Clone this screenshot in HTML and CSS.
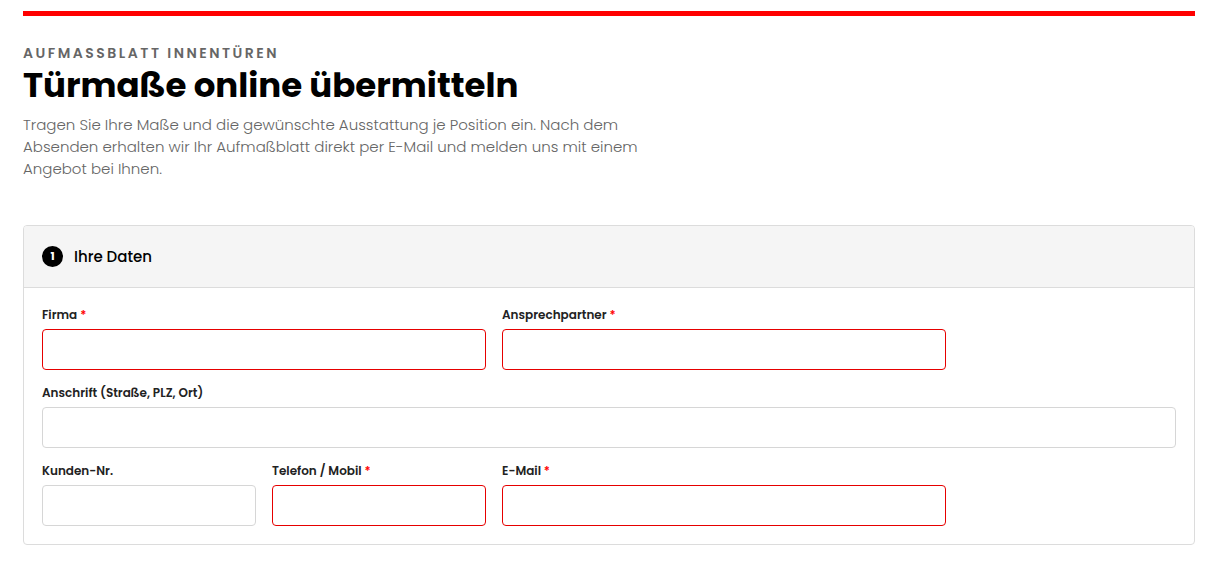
FILE: index.html
```html
<!DOCTYPE html>
<html lang="de">

<head>
  <meta charset="UTF-8" />
  <meta name="viewport" content="width=device-width, initial-scale=1.0" />
  <title>Aufmaßblatt Innentüren</title>
  <link rel="stylesheet" href="styles.css">
</head>

<body>
  <div class="page">
    <div class="topbar"></div>

    <header class="intro">
      <p class="eyebrow">Aufmassblatt Innentüren</p>
      <h1 class="title">Türmaße online übermitteln</h1>
      <p class="lead">Tragen Sie Ihre Maße und die gewünschte Ausstattung je Position ein. Nach dem Absenden erhalten wir Ihr Aufmaßblatt direkt per E-Mail und melden uns mit einem Angebot bei Ihnen.</p>
    </header>

    <form class="card" id="aufmass">
      <div class="cardHead">
        <span class="step">1</span>
        <h2>Ihre Daten</h2>
      </div>

      <div class="cardBody">
        <div class="field span2">
          <label for="firma">Firma <span class="req">*</span></label>
          <input class="inputText required" type="text" id="firma" name="firma" />
        </div>
        <div class="field span2">
          <label for="ansprechpartner">Ansprechpartner <span class="req">*</span></label>
          <input class="inputText required" type="text" id="ansprechpartner" name="ansprechpartner" />
        </div>

        <div class="field span5">
          <label for="anschrift">Anschrift (Straße, PLZ, Ort)</label>
          <input class="inputText" type="text" id="anschrift" name="anschrift" />
        </div>

        <div class="field">
          <label for="kundennr">Kunden-Nr.</label>
          <input class="inputText" type="text" id="kundennr" name="kundennr" />
        </div>
        <div class="field">
          <label for="telefon">Telefon / Mobil <span class="req">*</span></label>
          <input class="inputText required" type="text" id="telefon" name="telefon" />
        </div>
        <div class="field span2">
          <label for="email">E-Mail <span class="req">*</span></label>
          <input class="inputText required" type="email" id="email" name="email" />
        </div>
      </div>
    </form>
  </div>
</body>

</html>
```

FILE: styles.css
```css
body {
  margin: 0;
  font-family: 'Poppins', 'Inter', 'Open Sans', sans-serif;
  color: #111;
  background: #fff;
}

.page {
  width: 1172px;
  margin-left: 23px;
  padding-top: 11px;
}

.topbar {
  height: 5px;
  background: #ff0000;
}

.intro {
  padding-top: 28px;
}

.eyebrow {
  margin: 0;
  font-size: 14px;
  line-height: 18px;
  font-weight: 600;
  letter-spacing: 2.5px;
  text-transform: uppercase;
  color: #666;
}

.title {
  margin: 4px 0 2px;
  font-size: 34px;
  line-height: 38px;
  font-weight: 700;
  color: #000;
}

.lead {
  margin: 10px 0 0;
  max-width: 625px;
  font-size: 15px;
  line-height: 22px;
  font-weight: 300;
  color: #666;
}

.card {
  margin-top: 45px;
  border: 1px solid #dcdcdc;
  border-radius: 4px;
  overflow: hidden;
}

.cardHead {
  display: flex;
  align-items: center;
  gap: 11px;
  height: 61px;
  padding: 0 18px;
  background: #f5f5f5;
  border-bottom: 1px solid #dcdcdc;
}

.cardHead h2 {
  margin: 0;
  font-size: 15px;
  font-weight: 500;
  color: #000;
}

.step {
  display: flex;
  align-items: center;
  justify-content: center;
  width: 21px;
  height: 21px;
  border-radius: 50%;
  background: #000;
  color: #fff;
  font-size: 11px;
  font-weight: 700;
}

.cardBody {
  display: grid;
  grid-template-columns: repeat(5, 1fr);
  column-gap: 16px;
  row-gap: 15px;
  padding: 19px 18px 18px;
}

.field {
  display: flex;
  flex-direction: column;
}

.span2 {
  grid-column: span 2;
}

.span5 {
  grid-column: span 5;
}

.field label {
  font-size: 12px;
  line-height: 16px;
  font-weight: 600;
  color: #222;
  margin-bottom: 6px;
}

.req {
  color: #ff0000;
}

.inputText {
  box-sizing: border-box;
  height: 41px;
  border: 1px solid #d6d6d6;
  border-radius: 4px;
  font-size: 14px;
  padding: 0 10px;
}

.inputText.required {
  border-color: #e60000;
}
```
